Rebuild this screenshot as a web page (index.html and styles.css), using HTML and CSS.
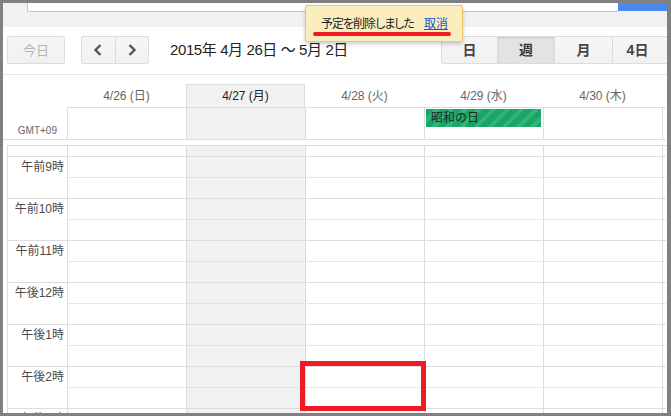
FILE: index.html
```html
<!DOCTYPE html>
<html lang="ja">
<head>
<meta charset="utf-8">
<link rel="stylesheet" href="styles.css">
</head>
<body>
<div class="frame">
  <div class="topband">
    <div class="topband-left"></div>
    <div class="search"></div>
    <div class="blue"></div>
  </div>

  <div class="toolbar">
    <div class="btn today">今日</div>
    <div class="group nav">
      <div class="seg"><svg width="10" height="12" viewBox="0 0 10 12"><polyline points="7.5,1 2.5,6 7.5,11" fill="none" stroke="#555" stroke-width="2.4"/></svg></div>
      <div class="seg"><svg width="10" height="12" viewBox="0 0 10 12"><polyline points="2.5,1 7.5,6 2.5,11" fill="none" stroke="#555" stroke-width="2.4"/></svg></div>
    </div>
    <div class="range">2015年 4月 26日 ～ 5月 2日</div>
    <div class="group views">
      <div class="seg v1">日</div>
      <div class="seg v2 active">週</div>
      <div class="seg v3">月</div>
      <div class="seg v4">4日</div>
    </div>
  </div>

  <div class="head">
    <div class="dayrow">
      <div class="gut"></div>
      <div class="dname">4/26 (日)</div>
      <div class="dname today-col">4/27 (月)</div>
      <div class="dname">4/28 (火)</div>
      <div class="dname">4/29 (水)</div>
      <div class="dname">4/30 (木)</div>
      <div class="tail"></div>
    </div>
    <div class="allday">
      <div class="gut tz">GMT+09</div>
      <div class="acell"></div>
      <div class="acell today-bg"></div>
      <div class="acell"></div>
      <div class="acell"><div class="event">昭和の日</div></div>
      <div class="acell"></div>
      <div class="acell tailcell"></div>
    </div>
  </div>

  <div class="grid">
    <div class="col c2"></div>
    <div class="col c3 today-bg"></div>
    <div class="col c4"></div>
    <div class="col c5"></div>
    <div class="col c6"></div>
    <div class="col c7"></div>

    <div class="row r1"></div>
    <div class="row hour r2"><div class="label">午前9時</div><div class="slot"><div class="half"></div></div></div>
    <div class="row hour r3"><div class="label">午前10時</div><div class="slot"><div class="half"></div></div></div>
    <div class="row hour r4"><div class="label">午前11時</div><div class="slot"><div class="half"></div></div></div>
    <div class="row hour r5"><div class="label">午後12時</div><div class="slot"><div class="half"></div></div></div>
    <div class="row hour r6"><div class="label">午後1時</div><div class="slot"><div class="half"></div></div></div>
    <div class="row hour r7"><div class="label">午後2時</div><div class="slot"><div class="half"></div></div></div>
    <div class="row hour r8"><div class="label">午後3時</div><div class="slot"><div class="half"></div></div></div>
  </div>

  <div class="toast"><span class="msg">予定を削除しました</span><a class="undo" href="#">取消</a></div>
  <div class="mark-line"></div>
  <div class="mark-box"></div>
</div>
</body>
</html>
```

FILE: styles.css
```css
html, body {
  margin: 0;
  padding: 0;
  background: #808080;
}

body {
  font-family: "Liberation Sans", "Noto Sans CJK JP", sans-serif;
  color: #222;
}

.frame {
  position: relative;
  width: 671px;
  height: 416px;
  box-sizing: border-box;
  border-style: solid;
  border-color: #808080;
  border-width: 3px 4px 3px 3px;
  background: #fff;
  overflow: hidden;
}

/* top band */
.topband {
  display: flex;
  align-items: flex-start;
  height: 24px;
  background: #f1f1f1;
}
.topband-left {
  width: 24px;
  flex-shrink: 0;
}
.search {
  flex: 1;
  height: 9px;
  box-sizing: border-box;
  background: #fff;
  border-left: 1px solid #c6c6c6;
  border-bottom: 1px solid #c6c6c6;
}
.blue {
  width: 49px;
  height: 8px;
  background: #4d88ec;
  flex-shrink: 0;
}

/* toolbar */
.toolbar {
  display: flex;
  align-items: flex-start;
  height: 48px;
  box-sizing: border-box;
  padding: 9px 0 0 4px;
  border-bottom: 1px solid #e5e5e5;
}
.btn, .group {
  box-sizing: border-box;
  height: 28px;
  border: 1px solid #dcdcdc;
  border-radius: 2px;
  background: linear-gradient(#f6f6f6, #f1f1f1);
}
.today {
  width: 58px;
  text-align: center;
  font-size: 13px;
  line-height: 27px;
  color: #b4b4b4;
  flex-shrink: 0;
}
.group {
  display: flex;
  flex-shrink: 0;
}
.nav {
  width: 68px;
  margin-left: 16px;
}
.nav .seg {
  width: 33px;
  display: flex;
  align-items: center;
  justify-content: center;
}
.nav .seg + .seg {
  border-left: 1px solid #dcdcdc;
}
.range {
  margin-left: 21px;
  font-size: 15px;
  line-height: 27px;
  letter-spacing: -0.4px;
  color: #222;
  white-space: nowrap;
}
.views {
  width: 228px;
  margin-left: auto;
  margin-right: -2px;
}
.views .seg {
  box-sizing: border-box;
  text-align: center;
  font-size: 14px;
  font-weight: bold;
  line-height: 26px;
  color: #444;
}
.views .seg + .seg {
  border-left: 1px solid #dcdcdc;
}
.v1 { width: 55px; }
.v2 { width: 57px; }
.v3 { width: 58px; }
.v4 { width: 56px; padding-right: 6px; }
.views .active {
  background: #e3e3e3;
  box-shadow: inset 0 1px 2px rgba(0, 0, 0, 0.12);
  color: #333;
}

/* header */
.head {
  width: 663px;
  margin-top: 9px;
}
.dayrow, .allday {
  display: grid;
  grid-template-columns: 64px repeat(5, 119px) 4px;
}
.dayrow {
  height: 23px;
}
.dname {
  box-sizing: border-box;
  text-align: center;
  font-size: 12px;
  line-height: 22px;
  padding-top: 1px;
  color: #666;
  white-space: nowrap;
}
.dname.today-col {
  background: #f1f1f1;
  border: 1px solid #dddddd;
  border-bottom: none;
  color: #222;
  line-height: 21px;
}
.allday {
  height: 32px;
  border-bottom: 1px solid #dddddd;
}
.gut.tz {
  display: flex;
  align-items: flex-end;
  justify-content: flex-end;
  padding: 0 10px 3px 0;
  font-size: 10px;
  color: #666;
}
.acell {
  box-sizing: border-box;
  border-top: 1px solid #dddddd;
  border-left: 1px solid #dddddd;
  padding: 1px 0 0 1px;
}
.today-bg {
  background: #f1f1f1;
}
.event {
  width: 115px;
  height: 18px;
  box-sizing: border-box;
  padding-left: 5px;
  font-size: 12px;
  line-height: 18px;
  color: #1f2a24;
  white-space: nowrap;
  background-color: #16a765;
  background-image: repeating-linear-gradient(135deg, rgba(255, 255, 255, 0) 0 6px, rgba(255, 255, 255, 0.13) 6px 10px);
}

/* time grid */
.grid {
  display: grid;
  grid-template-columns: 59px repeat(5, 119px) 4px;
  grid-template-rows: 10px repeat(7, 42px);
  margin: 5px 0 0 4px;
  width: 664px;
  box-sizing: border-box;
  border-top: 1px solid #dddddd;
  border-left: 1px solid #dddddd;
}
.col {
  grid-row: 1 / -1;
  border-left: 1px solid #dddddd;
}
.c2 { grid-column: 2; }
.c3 { grid-column: 3; }
.c4 { grid-column: 4; }
.c5 { grid-column: 5; }
.c6 { grid-column: 6; }
.c7 { grid-column: 7; }
.row {
  grid-column: 1 / -1;
  box-sizing: border-box;
  display: flex;
}
.r1 { grid-row: 1; }
.r2 { grid-row: 2; }
.r3 { grid-row: 3; }
.r4 { grid-row: 4; }
.r5 { grid-row: 5; }
.r6 { grid-row: 6; }
.r7 { grid-row: 7; }
.r8 { grid-row: 8; }
.row.hour {
  border-top: 1px solid #dddddd;
}
.label {
  width: 59px;
  flex-shrink: 0;
  box-sizing: border-box;
  padding: 2px 3px 0 0;
  text-align: right;
  font-size: 12px;
  line-height: 16px;
  color: #4a4a4a;
  white-space: nowrap;
}
.slot {
  flex: 1;
  padding-left: 2px;
}
.half {
  margin-top: 20px;
  border-top: 1px dotted #d2d2d2;
}

/* overlays */
.toast {
  position: absolute;
  left: 302px;
  top: 2px;
  width: 158px;
  height: 37px;
  box-sizing: border-box;
  padding: 9px 0 0 15px;
  background: #f9edbe;
  border: 1px solid #f0c36d;
  border-radius: 2px;
  box-shadow: 0 2px 4px rgba(0, 0, 0, 0.2);
  font-family: "Noto Sans CJK JP", sans-serif;
  font-size: 12px;
  line-height: 16px;
  white-space: nowrap;
  font-feature-settings: "palt";
}
.msg {
  color: #222;
  letter-spacing: -1px;
}
.undo {
  margin-left: 10px;
  color: #1155cc;
  text-decoration: underline;
}
.mark-line {
  position: absolute;
  left: 310px;
  top: 29px;
  width: 138px;
  height: 4px;
  border-radius: 2px;
  background: #ed1c24;
}
.mark-box {
  position: absolute;
  left: 297px;
  top: 358px;
  width: 126px;
  height: 50px;
  box-sizing: border-box;
  border: 5px solid #ed1c24;
}
```
